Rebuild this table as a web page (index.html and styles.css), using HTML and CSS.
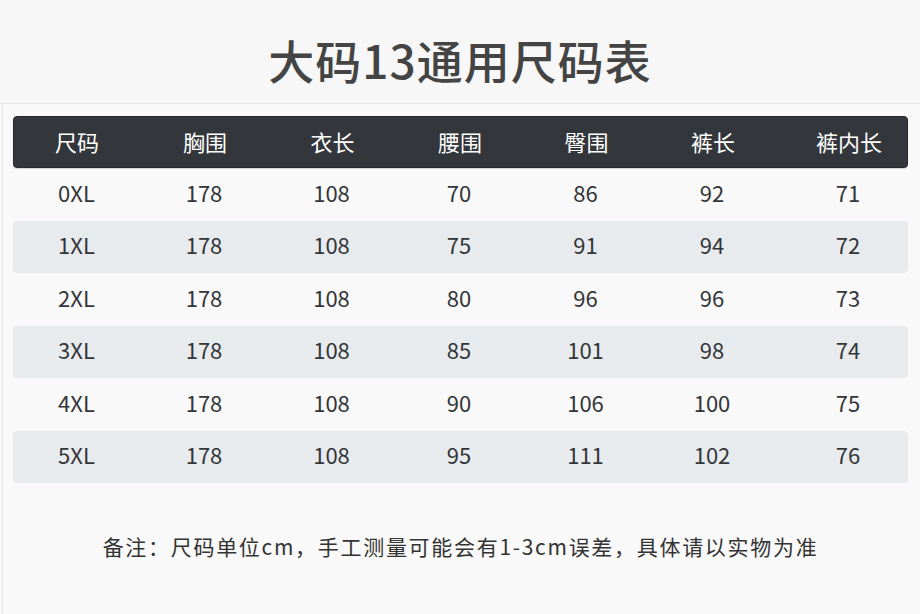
FILE: index.html
```html
<!DOCTYPE html>
<html lang="zh-CN">
<head>
<meta charset="utf-8">
<title>大码13通用尺码表</title>
<link rel="stylesheet" href="styles.css">
</head>
<body>
<div class="top"><h1 class="title">大码13通用尺码表</h1></div>
<div class="panel">
  <div class="table">
    <div class="row head">
      <div>尺码</div><div>胸围</div><div>衣长</div><div>腰围</div><div>臀围</div><div>裤长</div><div>裤内长</div>
    </div>
    <div class="row"><div>0XL</div><div>178</div><div>108</div><div>70</div><div>86</div><div>92</div><div>71</div></div>
    <div class="row alt"><div>1XL</div><div>178</div><div>108</div><div>75</div><div>91</div><div>94</div><div>72</div></div>
    <div class="row"><div>2XL</div><div>178</div><div>108</div><div>80</div><div>96</div><div>96</div><div>73</div></div>
    <div class="row alt"><div>3XL</div><div>178</div><div>108</div><div>85</div><div>101</div><div>98</div><div>74</div></div>
    <div class="row"><div>4XL</div><div>178</div><div>108</div><div>90</div><div>106</div><div>100</div><div>75</div></div>
    <div class="row alt"><div>5XL</div><div>178</div><div>108</div><div>95</div><div>111</div><div>102</div><div>76</div></div>
  </div>
  <p class="note">备注：尺码单位cm，手工测量可能会有1-3cm误差，具体请以实物为准</p>
</div>
</body>
</html>
```
FILE: styles.css
```css
html, body {
  margin: 0;
  padding: 0;
  background: #f8f8f8;
  font-family: "Noto Sans CJK SC", "Noto Sans", sans-serif;
  color: #333639;
}
.top {
  height: 103px;
  border-bottom: 1px solid #e4e4e4;
  display: flex;
  align-items: center;
  justify-content: center;
  background: #f7f7f7;
}
.title {
  margin: 0;
  padding-top: 14px;
  font-size: 46px;
  font-weight: 500;
  letter-spacing: 1px;
  color: #444444;
  line-height: 1;
}
.panel {
  margin-left: 2px;
  border-left: 1px solid #e6e6e6;
  padding: 12px 12px 0 10px;
  height: 498px;
  background: #f9f9f9;
}
.table {
  width: 895px;
}
.row {
  display: grid;
  grid-template-columns: 127px 128px 127px 128px 125px 128px 132px;
  height: 52.5px;
  box-sizing: border-box;
  padding-bottom: 5px;
  align-items: center;
  text-align: center;
  font-size: 22px;
}
.row > div:last-child {
  padding-left: 12px;
}
.row.head {
  height: 52px;
  padding-bottom: 2px;
  background: #33363b;
  color: #ffffff;
  border-radius: 4px;
  border: 1px solid #26282c;
  box-shadow: 0 1px 1px rgba(0,0,0,0.15);
  font-size: 22px;
}
.row.head > div:first-child {
  margin-left: -1px;
}
.row.alt {
  background: #e8ebee;
  border-radius: 4px;
}
.note {
  margin: 48px 0 0 0;
  text-align: center;
  font-size: 21px;
  letter-spacing: 1.7px;
  color: #333333;
  line-height: 30px;
}
```
